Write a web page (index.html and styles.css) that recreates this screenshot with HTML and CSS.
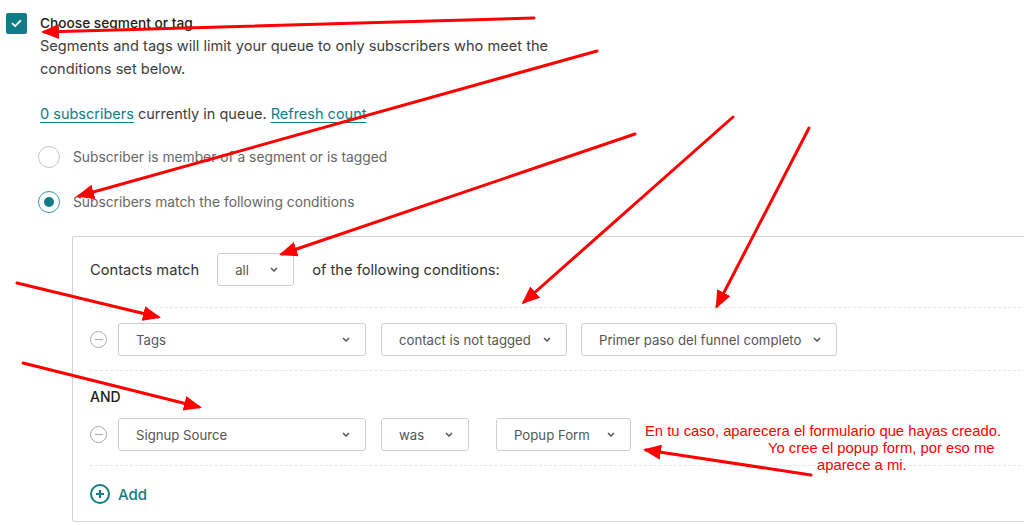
FILE: index.html
```html
<!DOCTYPE html>
<html>
<head>
<meta charset="utf-8">
<link rel="stylesheet" href="styles.css">
</head>
<body>
<div class="page">
  <div class="choose">
    <span class="checkbox">
      <svg width="11" height="9" viewBox="0 0 11 9"><path d="M1.5 4.6 L4.2 7.2 L9.5 1.6" fill="none" stroke="#fff" stroke-width="1.8" stroke-linecap="round" stroke-linejoin="round"/></svg>
    </span>
    <div class="choose-text">
      <div class="title">Choose segment or tag</div>
      <p class="desc">Segments and tags will limit your queue to only subscribers who meet the conditions set below.</p>
      <p class="count"><a class="link">0 subscribers</a> currently in queue. <a class="link">Refresh count</a></p>
    </div>
  </div>

  <div class="radios">
    <div class="radio-row"><span class="radio"></span><span class="radio-label">Subscriber is member of a segment or is tagged</span></div>
    <div class="radio-row"><span class="radio checked"></span><span class="radio-label">Subscribers match the following conditions</span></div>
  </div>

  <div class="panel">
    <div class="match-row">
      <span class="match-label">Contacts match</span>
      <div class="select sel-all"><span>all</span><svg class="chev" width="8" height="5" viewBox="0 0 8 5"><path d="M1 1 L4 4 L7 1" fill="none" stroke="#555" stroke-width="1.5"/></svg></div>
      <span class="match-label">of the following conditions:</span>
    </div>
    <div class="sep"></div>
    <div class="cond-row">
      <span class="minus"></span>
      <div class="select w-field"><span>Tags</span><svg class="chev" width="8" height="5" viewBox="0 0 8 5"><path d="M1 1 L4 4 L7 1" fill="none" stroke="#555" stroke-width="1.5"/></svg></div>
      <div class="select w-op"><span>contact is not tagged</span><svg class="chev" width="8" height="5" viewBox="0 0 8 5"><path d="M1 1 L4 4 L7 1" fill="none" stroke="#555" stroke-width="1.5"/></svg></div>
      <div class="select w-val"><span>Primer paso del funnel completo</span><svg class="chev" width="8" height="5" viewBox="0 0 8 5"><path d="M1 1 L4 4 L7 1" fill="none" stroke="#555" stroke-width="1.5"/></svg></div>
    </div>
    <div class="sep"></div>
    <div class="and">AND</div>
    <div class="cond-row r2">
      <span class="minus"></span>
      <div class="select w-field"><span>Signup Source</span><svg class="chev" width="8" height="5" viewBox="0 0 8 5"><path d="M1 1 L4 4 L7 1" fill="none" stroke="#555" stroke-width="1.5"/></svg></div>
      <div class="select w-was"><span>was</span><svg class="chev" width="8" height="5" viewBox="0 0 8 5"><path d="M1 1 L4 4 L7 1" fill="none" stroke="#555" stroke-width="1.5"/></svg></div>
      <div class="select w-popup"><span>Popup Form</span><svg class="chev" width="8" height="5" viewBox="0 0 8 5"><path d="M1 1 L4 4 L7 1" fill="none" stroke="#555" stroke-width="1.5"/></svg></div>
    </div>
    <div class="sep"></div>
    <div class="add-row">
      <span class="plus"></span>
      <span class="add">Add</span>
    </div>
  </div>
</div>

<div class="note">
  <div class="note-l1">En tu caso, aparecera el formulario que hayas creado.</div>
  <div class="note-l2">Yo cree el popup form, por eso me</div>
  <div class="note-l3">aparece a mi.</div>
</div>

<svg class="arrows" width="1024" height="525" viewBox="0 0 1024 525">
  <defs>
    <marker id="ah" markerWidth="6" markerHeight="5" refX="5" refY="2.5" orient="auto" markerUnits="strokeWidth">
      <path d="M0 0 L6 2.5 L0 5 Z" fill="#f00"/>
    </marker>
  </defs>
  <g stroke="#f00" stroke-width="3" fill="none" stroke-linecap="round" marker-end="url(#ah)">
    <line x1="534" y1="18" x2="44" y2="32"/>
    <line x1="597" y1="51" x2="79" y2="196"/>
    <line x1="635" y1="134" x2="282" y2="254"/>
    <line x1="733" y1="117" x2="524" y2="302"/>
    <line x1="809" y1="128" x2="717" y2="306"/>
    <line x1="17" y1="283" x2="158" y2="317"/>
    <line x1="23" y1="363" x2="199" y2="407"/>
    <line x1="811" y1="475" x2="646" y2="450"/>
  </g>
</svg>
</body>
</html>
```
FILE: styles.css
```css
html, body {
  margin: 0;
  padding: 0;
  background: #fff;
  overflow: hidden;
}
body {
  width: 1024px;
  height: 525px;
  position: relative;
  font-family: "Inter", "Roboto", sans-serif;
  color: #3d3d3d;
}
.page {
  padding: 13px 0 0 6px;
}
.choose {
  display: flex;
  gap: 13px;
}
.checkbox {
  width: 21px;
  height: 21px;
  background: #107d86;
  border-radius: 2px;
  display: flex;
  align-items: center;
  justify-content: center;
  flex: none;
}
.choose-text {
  flex: none;
  width: 525px;
}
.title {
  font-size: 13.7px;
  font-weight: 500;
  line-height: 21px;
  color: #241c15;
}
.desc {
  margin: 1px 0 0 0;
  font-size: 14.6px;
  line-height: 23px;
  color: #3d3d3d;
}
.count {
  margin: 21px 0 0 0;
  font-size: 14.5px;
  line-height: 23px;
  color: #3d3d3d;
}
.link {
  color: #107d86;
  text-decoration: underline;
  text-underline-offset: 3px;
  text-decoration-thickness: 1px;
}
.radios {
  padding: 21px 0 0 32px;
  display: flex;
  flex-direction: column;
  gap: 23px;
}
.radio-row {
  display: flex;
  align-items: center;
  gap: 13px;
  height: 22px;
}
.radio {
  width: 20px;
  height: 20px;
  border: 1px solid #c6c6c6;
  border-radius: 50%;
  box-sizing: content-box;
  position: relative;
  flex: none;
}
.radio.checked {
  border-color: #3a9aa2;
}
.radio.checked::after {
  content: "";
  position: absolute;
  left: 5px;
  top: 5px;
  width: 10px;
  height: 10px;
  border-radius: 50%;
  background: #107d86;
}
.radio-label {
  font-size: 13.8px;
  color: #666;
}
.panel {
  margin: 23px 0 0 66px;
  width: 1000px;
  height: 286px;
  border: 1px solid #d2d2d2;
  border-radius: 2px;
  padding: 16px 0 0 17px;
  box-sizing: border-box;
}
.match-row {
  display: flex;
  align-items: center;
  height: 33px;
}
.match-label {
  font-size: 14.7px;
  color: #333;
}
.sel-all {
  width: 77px;
  margin: 0 18px 0 18px;
}
.select {
  box-sizing: border-box;
  height: 33px;
  border: 1px solid #cfcfcf;
  border-radius: 3px;
  display: flex;
  align-items: center;
  justify-content: space-between;
  padding: 0 15px 0 17px;
  font-size: 13.2px;
  color: #555;
  flex: none;
}
.chev {
  flex: none;
}
.sep {
  border-top: 1px dashed #e6e6e6;
  margin: 21px 0 0 0;
}
.cond-row {
  display: flex;
  align-items: center;
  height: 33px;
  margin-top: 15px;
}
.minus {
  width: 15px;
  height: 15px;
  border: 1.5px solid #ababab;
  border-radius: 50%;
  margin-right: 11px;
  position: relative;
  flex: none;
}
.minus::after {
  content: "";
  position: absolute;
  left: 3.5px;
  top: 6.5px;
  width: 8px;
  height: 1.5px;
  background: #ababab;
}
.w-field { width: 248px; margin-right: 15px; }
.w-op { width: 186px; margin-right: 14px; }
.w-val { width: 256px; }
.w-was { width: 88px; margin-right: 27px; }
.w-popup { width: 135px; }
.cond-row + .sep { margin-top: 14px; }
.and {
  margin-top: 16px;
  font-size: 14px;
  font-weight: 500;
  line-height: 20px;
  color: #241c15;
}
.cond-row.r2 { margin-top: 11px; }
.add-row {
  display: flex;
  align-items: center;
  gap: 8px;
  margin-top: 17px;
  height: 22px;
}
.plus {
  width: 16px;
  height: 16px;
  border: 2px solid #107d86;
  border-radius: 50%;
  position: relative;
  flex: none;
}
.plus::before, .plus::after {
  content: "";
  position: absolute;
  background: #107d86;
}
.plus::before { left: 4px; top: 7px; width: 8px; height: 2px; }
.plus::after { left: 7px; top: 4px; width: 2px; height: 8px; }
.add {
  font-size: 15px;
  font-weight: 500;
  color: #107d86;
}
.note {
  position: absolute;
  left: 645px;
  top: 423px;
  color: #f00;
  font-family: "Liberation Sans Narrow", "Liberation Sans", sans-serif;
  font-size: 14.8px;
  line-height: 17px;
}
.note-l2 { margin-left: 123px; }
.note-l3 { margin-left: 172px; }
.arrows {
  position: absolute;
  left: 0;
  top: 0;
  pointer-events: none;
}
```
